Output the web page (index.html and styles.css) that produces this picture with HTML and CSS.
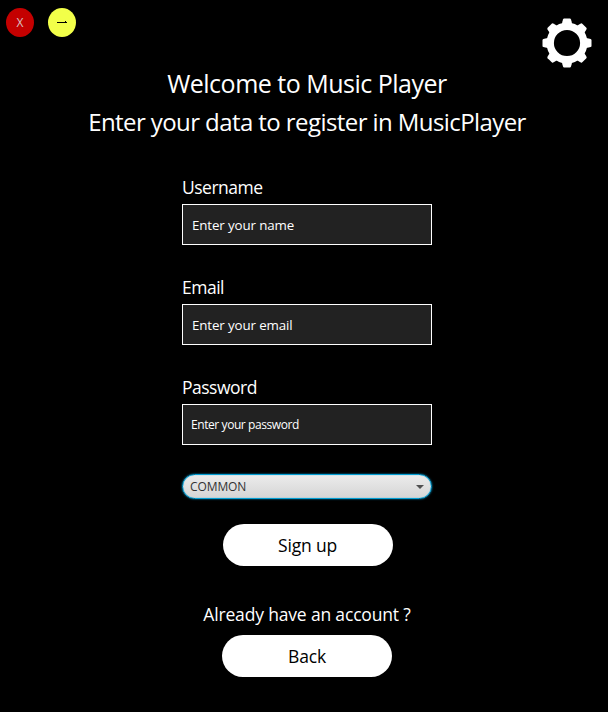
FILE: index.html
```html
<!DOCTYPE html>
<html lang="en">
<head>
<meta charset="utf-8">
<title>Music Player</title>
<link rel="stylesheet" href="styles.css">
</head>
<body>
<header class="bar">
  <button class="dot close"><span>X</span></button>
  <button class="dot minimize"><svg width="12" height="6" viewBox="0 0 12 6" shape-rendering="crispEdges"><path d="M1 2h10v1H1zM9 1h1v1H9z" fill="#000"/></svg></button>
  <svg class="gear" width="50" height="50" viewBox="-25 -25 50 50">
    <g fill="#fff">
      <path id="tooth" d="M-5.2-18L-4.6-21.6L-4-23.6Q-3.7-24.5-2.9-24.5H2.9Q3.7-24.5 4-23.6L4.6-21.6L5.2-18z"/>
      <use href="#tooth" transform="rotate(45)"/><use href="#tooth" transform="rotate(90)"/>
      <use href="#tooth" transform="rotate(135)"/><use href="#tooth" transform="rotate(180)"/>
      <use href="#tooth" transform="rotate(225)"/><use href="#tooth" transform="rotate(270)"/>
      <use href="#tooth" transform="rotate(315)"/>
    </g>
    <circle r="16.8" fill="none" stroke="#fff" stroke-width="7.4"/>
  </svg>
</header>
<main>
  <h1 class="title t1"><span>Welcome to Music Player</span></h1>
  <h2 class="title t2"><span>Enter your data to register in MusicPlayer</span></h2>
  <form class="form">
    <div class="field"><label>Username</label><div class="input"><span>Enter your name</span></div></div>
    <div class="field"><label>Email</label><div class="input"><span>Enter your email</span></div></div>
    <div class="field"><label>Password</label><div class="input small"><span>Enter your password</span></div></div>
    <div class="select"><span>COMMON</span><svg width="8" height="4" viewBox="0 0 8 4"><path d="M0 0h8L4 4z" fill="#505050"/></svg></div>
  </form>
  <button class="pill signup"><span>Sign up</span></button>
  <p class="already"><span>Already have an account ?</span></p>
  <button class="pill back"><span>Back</span></button>
</main>
</body>
</html>
```
FILE: styles.css
```css
* { box-sizing: border-box; }
body {
  margin: 0;
  height: 712px;
  overflow: hidden;
  background: #000;
  color: #fff;
  font-family: "Open Sans", "Noto Sans", sans-serif;
}
h1, h2, p { margin: 0; font-weight: 400; }
button { border: 0; padding: 0; font-family: inherit; }
span { white-space: nowrap; }
.bar { display: flex; align-items: flex-start; height: 63px; padding: 8px 16px 0 6px; gap: 14px; }
.dot { display: flex; align-items: center; justify-content: center; width: 28px; height: 29px; border-radius: 50%; }
.close { background: #c40000; color: #d8c0c0; font-size: 12px; }
.minimize { background: #f2ff49; }
.gear { margin: 10px 0 0 auto; }
main { display: flex; flex-direction: column; align-items: center; padding-left: 6px; }
.title { height: 40px; line-height: 38px; }
.t1 { font-size: 25px; line-height: 40px; letter-spacing: -0.5px; }
.t2 { font-size: 24px; letter-spacing: -0.58px; }
.form { width: 250px; margin-top: 33px; }
.field { height: 100px; }
label { display: block; height: 28px; line-height: 23px; font-size: 17.5px; letter-spacing: -0.5px; }
.input { height: 41px; line-height: 40px; padding-left: 9px; border: 1px solid #fff; background: #222; font-size: 13.33px; letter-spacing: -0.12px; }
.small { padding-left: 8px; font-size: 12px; letter-spacing: -0.42px; }
.select {
  display: flex; align-items: center; justify-content: space-between;
  width: 250px; height: 25px; margin-top: -2px; padding: 0 7px;
  border: 1px solid #039ed3; border-radius: 13px;
  box-shadow: 0 0 2px 0 #039ed3, inset 0 0 1px #039ed3;
  background: linear-gradient(#ececec, #d5d5d5);
  color: #333; font-size: 12px; letter-spacing: -0.1px;
}
.pill { width: 170px; height: 42px; line-height: 41px; border-radius: 21px; background: #fff; color: #000; font-size: 17.5px; letter-spacing: -0.17px; }
.signup { margin: 25px 0 0 1px; }
.already { height: 69px; padding-top: 36px; line-height: 25px; font-size: 17.5px; letter-spacing: -0.17px; }
```
